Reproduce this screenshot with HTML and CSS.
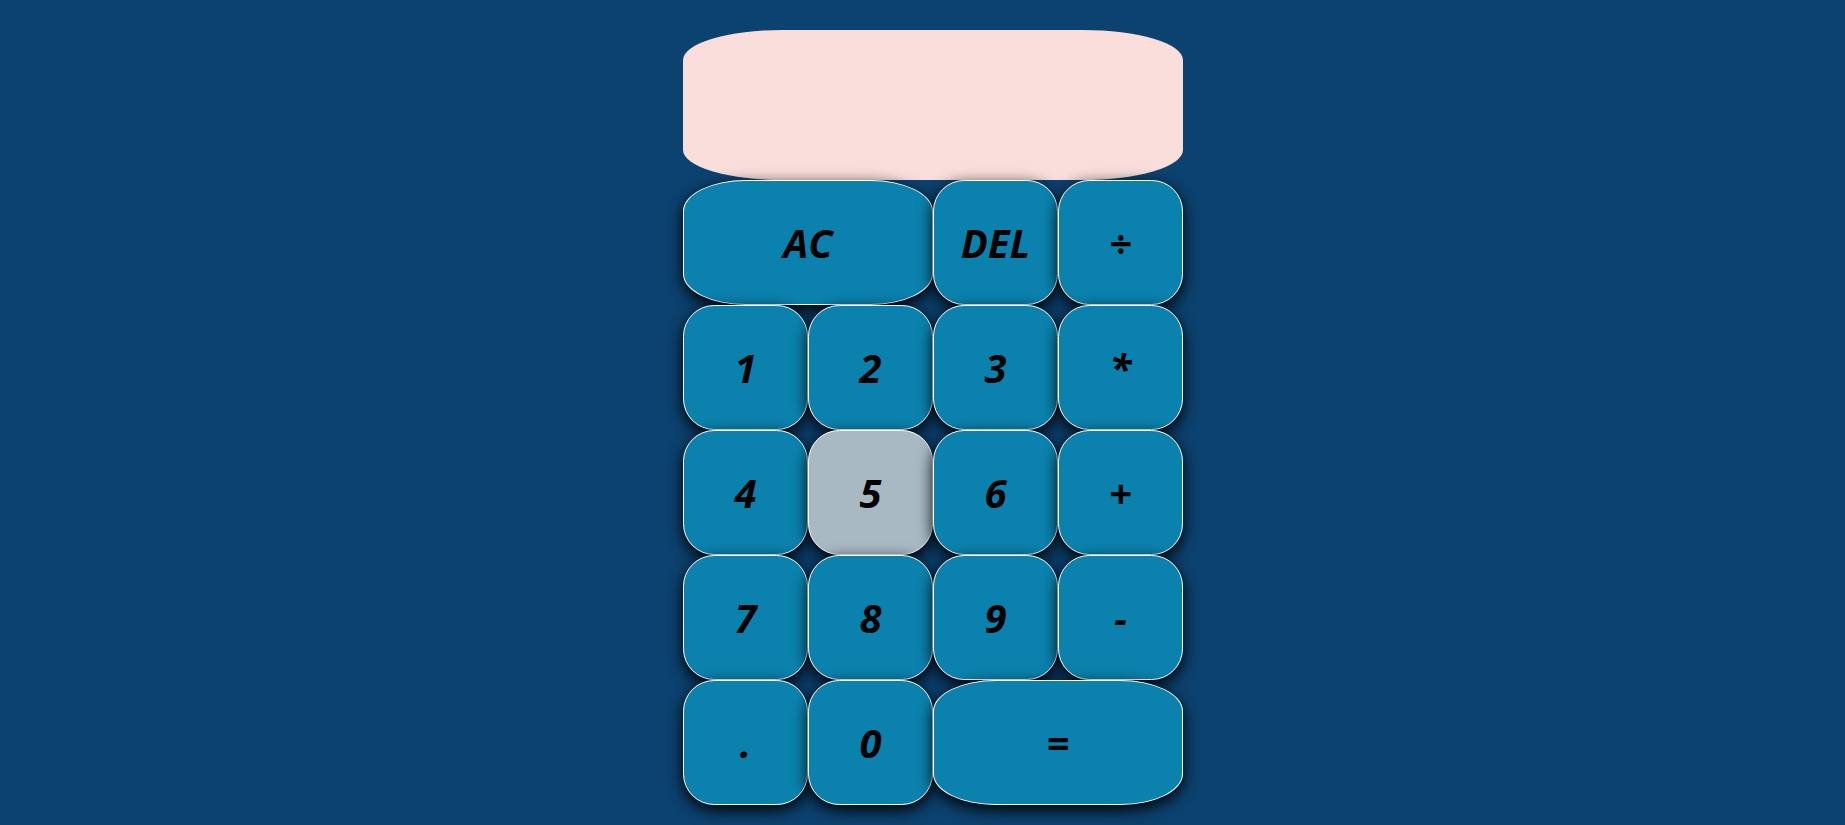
FILE: index.html
```html
<!DOCTYPE html>
<html>
<head>
<meta charset="utf-8">
<link rel="stylesheet" href="styles.css">
</head>
<body>
<div class="calculator">
  <div class="output"><div class="previous"></div><div class="current"></div></div>
  <button class="key span-two">AC</button>
  <button class="key">DEL</button>
  <button class="key">÷</button>
  <button class="key">1</button>
  <button class="key">2</button>
  <button class="key">3</button>
  <button class="key">*</button>
  <button class="key">4</button>
  <button class="key hover">5</button>
  <button class="key">6</button>
  <button class="key">+</button>
  <button class="key">7</button>
  <button class="key">8</button>
  <button class="key">9</button>
  <button class="key">-</button>
  <button class="key">.</button>
  <button class="key">0</button>
  <button class="key span-two">=</button>
</div>
</body>
</html>
```
FILE: styles.css
```css
* { box-sizing: border-box; }
html, body { margin: 0; padding: 0; }
body {
  background: #0c4270;
  min-height: 825px;
  overflow: hidden;
  font-family: "Open Sans", "DejaVu Sans", sans-serif;
}
.calculator {
  display: grid;
  grid-template-columns: repeat(4, 125px);
  grid-template-rows: 150px repeat(5, 125px);
  width: 500px;
  margin: 30px 0 0 calc(50% - 239.5px);
}
.output {
  grid-column: 1 / -1;
  background: #f9dedc;
  border-radius: 20%;
}
.key {
  font-family: "Open Sans", "DejaVu Sans", sans-serif;
  font-size: 40px;
  font-weight: 700;
  font-style: italic;
  color: #000;
  background: #0b82ad;
  border: 1px solid #ffffff;
  border-radius: 25%;
  box-shadow: 0 5px 16px #000;
  padding: 0;
  margin: 0;
  outline: none;
  cursor: pointer;
}
.key.hover { background: #a9b9c4; }
.span-two { grid-column: span 2; }
```
